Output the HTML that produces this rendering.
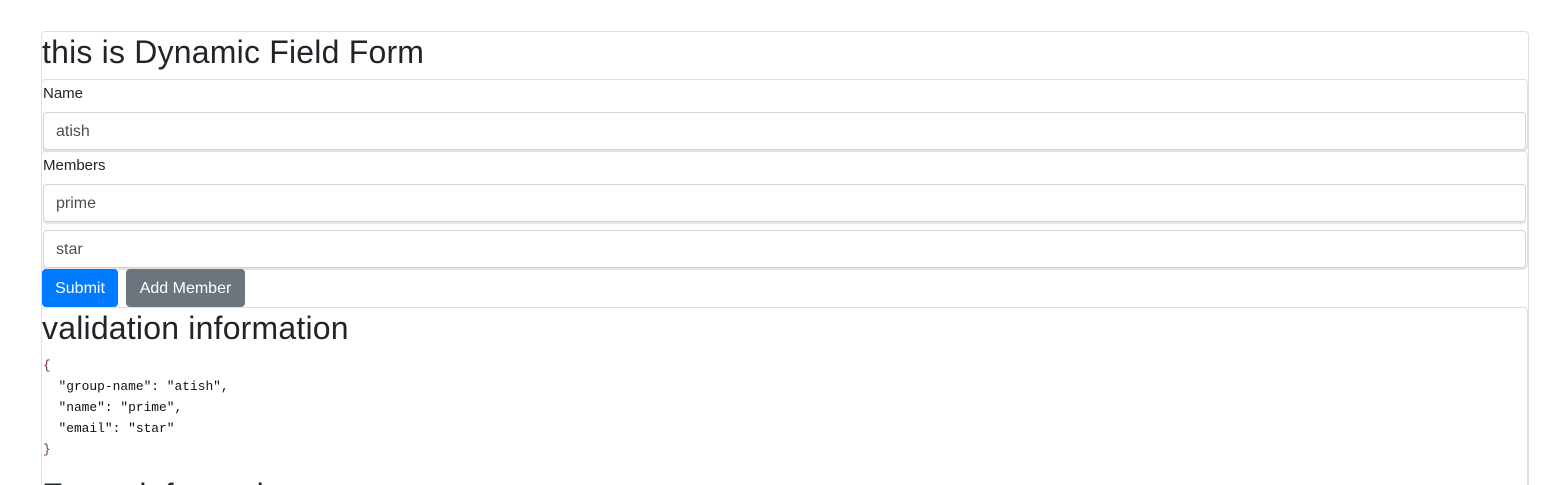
<!DOCTYPE html>
<html><head><meta charset="utf-8"><style>
*{box-sizing:border-box;margin:0;padding:0}
html,body{width:1550px;height:485px;overflow:hidden}
body{background:#fff;font-family:"Liberation Sans",sans-serif;color:#212529;position:relative}
.b{position:absolute;border:1px solid #dfe0e2;border-radius:4px}
.inp{position:absolute;left:43px;width:1483px;height:38px;border:1px solid #ced4da;border-radius:4px;box-shadow:0 2px 1px #e2e3e5;font-size:16px;color:#495057;padding:10px 12px 0}
.t{position:absolute;white-space:nowrap}
h2{position:absolute;font-weight:500;font-size:32px;letter-spacing:0.2px;white-space:nowrap;left:42px}
.btn{position:absolute;top:269px;height:38px;border-radius:4px;color:#fff;font-size:16px;text-align:center;line-height:40px}
pre{position:absolute;left:43px;top:355px;font-family:"Liberation Mono",monospace;font-size:12.9px;line-height:21px;color:#111}
</style></head><body>
<div class="b" style="left:41px;top:31px;width:1488px;height:470px"></div>
<h2 style="top:34px">this is Dynamic Field Form</h2>
<div class="b" style="left:41px;top:79px;width:1487px;height:72px"></div>
<div class="t" style="left:43px;top:85px;font-size:15px">Name</div>
<div class="inp" style="top:112px">atish</div>
<div class="b" style="left:41px;top:151px;width:1487px;height:118px"></div>
<div class="t" style="left:43px;top:157px;font-size:15px">Members</div>
<div class="inp" style="top:184px">prime</div>
<div class="inp" style="top:230px">star</div>
<div class="btn" style="left:42px;width:76px;background:#007bff">Submit</div>
<div class="btn" style="left:126px;width:119px;background:#6c757d">Add Member</div>
<div class="b" style="left:41px;top:307px;width:1487px;height:200px"></div>
<h2 style="top:310px">validation information</h2>
<pre><span style="color:#6f2c5a">{</span>
  "group-name": "atish",
  "name": "prime",
  "email": "star"
<span style="color:#6f2c5a">}</span></pre>
<h2 style="top:477px">Errors information</h2>
</body></html>
